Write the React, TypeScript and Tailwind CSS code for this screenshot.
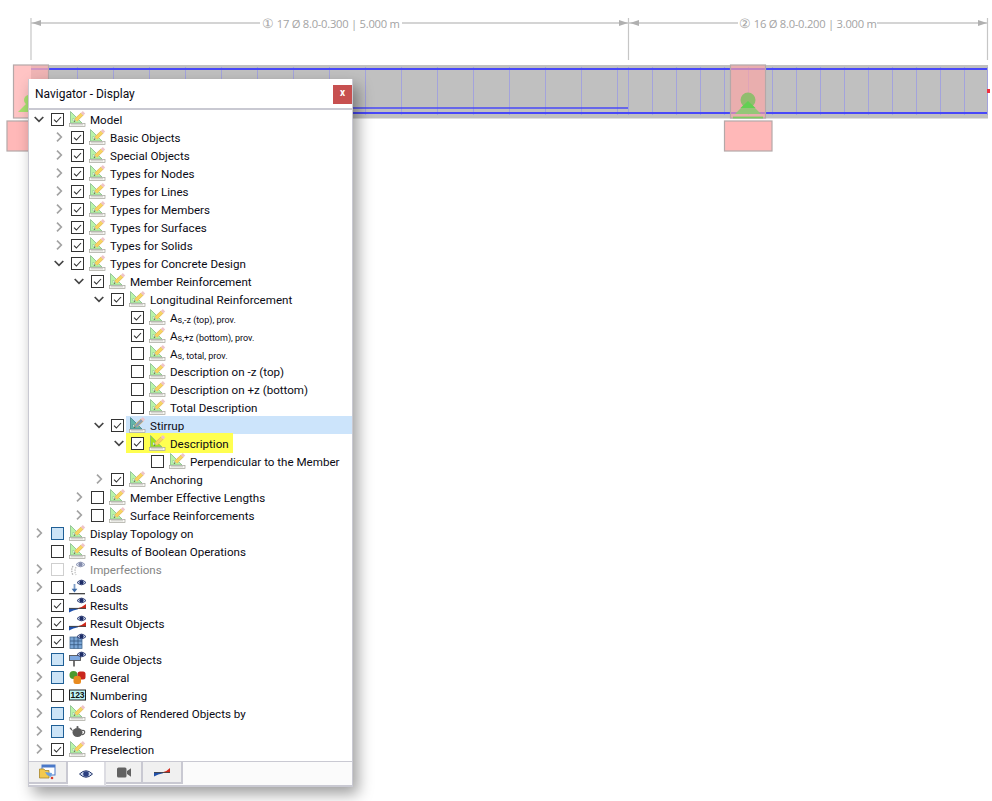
import type { ReactNode } from "react";

type Check = "on" | "off" | "fill" | "dis";
type IconName = "ruler" | "imperf" | "loads" | "results" | "mesh" | "guide" | "general" | "numbers" | "teapot";

type Row = {
  level: number;
  open?: boolean;
  leaf?: boolean;
  check: Check;
  icon?: IconName;
  label: ReactNode;
  mode?: "selected" | "yellow";
  muted?: boolean;
};

const sub = (rest: string) => (
  <>
    A<span className="text-[9px] relative top-[1px]">{rest}</span>
  </>
);

const rows: Row[] = [
  { level: 0, open: true, check: "on", label: "Model" },
  { level: 1, check: "on", label: "Basic Objects" },
  { level: 1, check: "on", label: "Special Objects" },
  { level: 1, check: "on", label: "Types for Nodes" },
  { level: 1, check: "on", label: "Types for Lines" },
  { level: 1, check: "on", label: "Types for Members" },
  { level: 1, check: "on", label: "Types for Surfaces" },
  { level: 1, check: "on", label: "Types for Solids" },
  { level: 1, open: true, check: "on", label: "Types for Concrete Design" },
  { level: 2, open: true, check: "on", label: "Member Reinforcement" },
  { level: 3, open: true, check: "on", label: "Longitudinal Reinforcement" },
  { level: 4, leaf: true, check: "on", label: sub("s,-z (top), prov.") },
  { level: 4, leaf: true, check: "on", label: sub("s,+z (bottom), prov.") },
  { level: 4, leaf: true, check: "off", label: sub("s, total, prov.") },
  { level: 4, leaf: true, check: "off", label: "Description on -z (top)" },
  { level: 4, leaf: true, check: "off", label: "Description on +z (bottom)" },
  { level: 4, leaf: true, check: "off", label: "Total Description" },
  { level: 3, open: true, check: "on", label: "Stirrup", mode: "selected" },
  { level: 4, open: true, check: "on", label: "Description", mode: "yellow" },
  { level: 5, leaf: true, check: "off", label: "Perpendicular to the Member" },
  { level: 3, check: "on", label: "Anchoring" },
  { level: 2, check: "off", label: "Member Effective Lengths" },
  { level: 2, check: "off", label: "Surface Reinforcements" },
  { level: 0, check: "fill", label: "Display Topology on" },
  { level: 0, leaf: true, check: "off", label: "Results of Boolean Operations" },
  { level: 0, check: "dis", icon: "imperf", label: "Imperfections", muted: true },
  { level: 0, check: "off", icon: "loads", label: "Loads" },
  { level: 0, leaf: true, check: "on", icon: "results", label: "Results" },
  { level: 0, check: "on", icon: "results", label: "Result Objects" },
  { level: 0, check: "on", icon: "mesh", label: "Mesh" },
  { level: 0, check: "fill", icon: "guide", label: "Guide Objects" },
  { level: 0, check: "fill", icon: "general", label: "General" },
  { level: 0, check: "off", icon: "numbers", label: "Numbering" },
  { level: 0, check: "fill", label: "Colors of Rendered Objects by" },
  { level: 0, check: "fill", icon: "teapot", label: "Rendering" },
  { level: 0, check: "on", label: "Preselection" },
];

const indent = ["pl-[4px]", "pl-[24px]", "pl-[44px]", "pl-[64px]", "pl-[84px]", "pl-[104px]"];

function Eye({ x = 8, y = 0 }: { x?: number; y?: number }) {
  return (
    <g transform={`translate(${x} ${y})`}>
      <path d="M0 3.6 Q4.5 -1.4 9 3.6 Q4.5 8 0 3.6Z" fill="#c9d6ec" stroke="#26356e" strokeWidth="0.9" />
      <circle cx="4.5" cy="3.4" r="2.1" fill="#1d2c66" />
    </g>
  );
}

function Ruler({ mode }: { mode?: Row["mode"] }) {
  const tri = mode === "selected" ? "#62b3a8" : mode === "yellow" ? "#a2e21a" : "#b8f5a8";
  const edge = mode === "selected" ? "#44848a" : "#86ba8c";
  const pencil = mode === "selected" ? "#8a9db4" : "#f8d662";
  return (
    <svg width="17" height="16" viewBox="0 0 17 16" className="shrink-0">
      <path d="M1.5 0.5 L1.5 12 L13 12 Z" fill={tri} stroke={edge} strokeWidth="0.8" />
      <path d="M4 7 L4 10 L7 10 Z" fill="#f4fff0" stroke={edge} strokeWidth="0.5" />
      <rect x="0.5" y="12.5" width="15.5" height="3" fill="#f8f8f4" stroke="#a4a49c" strokeWidth="0.7" />
      <path d="M3 13 V14.4 M5 13 V14.4 M7 13 V14.4 M9 13 V14.4 M11 13 V14.4 M13 13 V14.4" stroke="#8c8c84" strokeWidth="0.6" />
      <path d="M6.8 9.2 L13.2 3" stroke="#e0b65c" strokeWidth="3.8" />
      <path d="M6.8 9.2 L13.2 3" stroke={pencil} strokeWidth="2.6" />
      <path d="M13 3.2 L15 1.2" stroke="#eec4ca" strokeWidth="3.4" />
      <path d="M6 10.4 L4.8 11.2 L5.4 8.8Z" fill="#6a5a3a" />
    </svg>
  );
}

function TreeIcon({ name, mode }: { name?: IconName; mode?: Row["mode"] }) {
  if (!name || name === "ruler") return <Ruler mode={mode} />;
  return (
    <svg width="17" height="16" viewBox="0 0 17 16" className="shrink-0">
      {name === "imperf" && (
        <g opacity="0.55">
          <path d="M4 5 Q1.5 9 4 14" fill="none" stroke="#777" strokeWidth="1.4" strokeDasharray="1.5 1" />
          <path d="M7 6 Q5 10 7 14" fill="none" stroke="#999" strokeWidth="1.4" strokeDasharray="1.5 1" />
          <Eye x={7} y={0} />
        </g>
      )}
      {name === "loads" && (
        <>
          <path d="M0 14.7 H16" stroke="#333" strokeWidth="1.2" />
          <path d="M5.5 5 V10.5" stroke="#7f9fc8" strokeWidth="1.8" />
          <path d="M2.6 9.8 H8.4 L5.5 13.4Z" fill="#3e6ca8" />
          <Eye />
        </>
      )}
      {name === "results" && (
        <>
          <path d="M0 11.5 H8 Q13 10.5 17 7 V11.5 Z" fill="#cf2a1c" />
          <path d="M0 11.5 H9 V12.3 Q4 13 0 15.5Z" fill="#1f4fa8" />
          <path d="M0 11.4 H17" stroke="#222" strokeWidth="0.8" />
          <Eye />
        </>
      )}
      {name === "mesh" && (
        <>
          <rect x="1" y="4" width="12" height="11.5" fill="#7aa6d6" stroke="#4a6f96" strokeWidth="0.8" />
          <path d="M5 4 V15.5 M9 4 V15.5 M1 8 H13 M1 11.7 H13" stroke="#35577f" strokeWidth="0.8" />
          <Eye />
        </>
      )}
      {name === "guide" && (
        <>
          <path d="M5 9 V15.5" stroke="#666" strokeWidth="1.8" />
          <rect x="0.5" y="4.5" width="11" height="5" fill="#7ea8e0" stroke="#555" strokeWidth="0.9" />
          <Eye />
        </>
      )}
      {name === "general" && (
        <>
          <circle cx="4.5" cy="6" r="4" fill="#4c9a2e" />
          <rect x="8.5" y="2.5" width="8" height="8" rx="2.5" fill="#c9261e" />
          <rect x="4.5" y="7" width="7.5" height="8" rx="2.5" fill="#e88a1f" />
        </>
      )}
      {name === "numbers" && (
        <>
          <rect x="0.5" y="3" width="16" height="10" fill="#bff3f3" stroke="#222" />
          <text x="8.5" y="11.4" textAnchor="middle" fontSize="8.5" fontWeight="700" fontFamily="'Liberation Sans', sans-serif" fill="#111">123</text>
        </>
      )}
      {name === "teapot" && (
        <>
          <ellipse cx="8.5" cy="9.5" rx="5" ry="4.6" fill="#5c5c5c" />
          <path d="M4 8.5 Q1.5 6.5 0.5 5 L2 4.5 L5 10Z" fill="#5c5c5c" />
          <path d="M13 7.5 Q16.5 7 15.5 10 Q14.5 12 12.5 11.5" fill="none" stroke="#5c5c5c" strokeWidth="1.2" />
          <circle cx="8.5" cy="4.2" r="1.1" fill="#5c5c5c" />
        </>
      )}
    </svg>
  );
}

function Chevron({ open }: { open?: boolean }) {
  return (
    <svg width="12" height="12" viewBox="0 0 12 12" className="shrink-0">
      {open ? (
        <path d="M1.7 4 L6 8.3 L10.3 4" fill="none" stroke="#444" strokeWidth="1.7" />
      ) : (
        <path d="M4 1.7 L8.3 6 L4 10.3" fill="none" stroke="#a3a3a3" strokeWidth="1.7" />
      )}
    </svg>
  );
}

function CheckBox({ state }: { state: Check }) {
  const look = {
    on: "border-[#333] bg-white",
    off: "border-[#333] bg-white",
    fill: "border-[#1f5f96] bg-[#cce4f7]",
    dis: "border-[#cfcfcf] bg-white",
  }[state];
  return (
    <span className={`flex items-center justify-center w-[13px] h-[13px] border shrink-0 ${look}`}>
      {state === "on" && (
        <svg width="11" height="11" viewBox="0 0 11 11">
          <path d="M2 5.6 L4.4 8 L9 3" fill="none" stroke="#333" strokeWidth="1.1" />
        </svg>
      )}
    </span>
  );
}

function TreeRow({ row }: { row: Row }) {
  const text = (
    <span className={`ml-[4px] pt-[2px] whitespace-nowrap ${row.muted ? "text-[#858585]" : "text-[#0a0a14]"}`}>{row.label}</span>
  );
  return (
    <div className={`flex items-center h-[18px] ${indent[row.level]}`}>
      {row.leaf ? <span className="w-3 shrink-0" /> : <Chevron open={row.open} />}
      {row.mode === "yellow" ? (
        <div className="flex items-center h-[20px] ml-[1px] pl-[5px] pr-[4px] bg-[#ffff50]">
          <CheckBox state={row.check} />
          <span className="w-[5px]" />
          <TreeIcon name={row.icon} mode={row.mode} />
          {text}
        </div>
      ) : (
        <>
          <span className="w-[6px] shrink-0" />
          <CheckBox state={row.check} />
          {row.mode === "selected" ? (
            <div className="flex items-center flex-1 h-[18px] ml-[2px] pl-[3px] bg-[#cce4fb]">
              <TreeIcon name={row.icon} mode={row.mode} />
              {text}
            </div>
          ) : (
            <>
              <span className="w-[5px] shrink-0" />
              <TreeIcon name={row.icon} mode={row.mode} />
              {text}
            </>
          )}
        </>
      )}
    </div>
  );
}

const leftStirrups = Array.from({ length: 16 }, (_, i) => 617 - 36 * i);
const rightStirrups = [628, 652, 676, 700, 724, 748, 772, 796, 820, 844, 868, 892, 916, 940, 964, 987];

function Drawing() {
  return (
    <svg width="992" height="160" viewBox="0 0 992 160" className="block">
      {/* dimension lines */}
      <g stroke="#c6c6c6" strokeWidth="1.2">
        <path d="M31 18 V60 M628.5 18 V60 M987.5 18 V60" />
        <path d="M31 23 H260 M402 23 H628 M629 23 H738 M877 23 H987" strokeWidth="1.6" />
      </g>
      <g fill="#b0b0b0">
        <path d="M32 23 L41 20 V26Z" />
        <path d="M628 23 L619 20 V26Z" />
        <path d="M630 23 L639 20 V26Z" />
        <path d="M987 23 L978 20 V26Z" />
      </g>
      <g fontFamily="'Open Sans', sans-serif" fontSize="11.2" letterSpacing="-0.25" fill="#a3a3a3" textAnchor="middle">
        <text x="331" y="28"><tspan fontSize="13">①</tspan> 17 Ø 8.0-0.300 | 5.000 m</text>
        <text x="808" y="28"><tspan fontSize="13">②</tspan> 16 Ø 8.0-0.200 | 3.000 m</text>
      </g>

      {/* beam */}
      <rect x="31" y="65" width="957" height="53.5" fill="#c0c0c0" />
      <g stroke="#a3a3dc" strokeWidth="1">
        {leftStirrups.map((x) => (
          <path key={x} d={`M${x + 0.5} 67 V115`} />
        ))}
        {rightStirrups.map((x) => (
          <path key={x} d={`M${x + 0.5} 67 V115`} />
        ))}
      </g>
      <path d="M31 69 H987 M31 113 H987" stroke="#4848f8" strokeWidth="2" />
      <path d="M340 108 H628" stroke="#4848f8" strokeWidth="1.6" />
      <rect x="987" y="89" width="3" height="4" fill="#f03040" />

      {/* supports */}
      <g stroke="#b4a8a8" strokeWidth="1.2">
        <rect x="13.5" y="65" width="35" height="53" fill="#ffb0b0" fillOpacity="0.75" />
        <rect x="7" y="121" width="48" height="30" fill="#ffb8b8" />
        <rect x="730.5" y="65" width="35" height="53" fill="#ffa4a4" fillOpacity="0.65" />
        <rect x="724.5" y="121" width="47.5" height="30" fill="#ffb8b8" />
      </g>
      <path d="M18 112 L31 99 L38 112Z" fill="#a8e070" />
      <circle cx="29" cy="100" r="5" fill="#a8e070" />
      <path d="M748 101 L761 114 H735Z" fill="#94c678" />
      <circle cx="748" cy="100" r="7.5" fill="#90bd6e" />
      <path d="M748 101 L755.5 108 H740.5Z" fill="#62d052" />
      <rect x="733" y="116.6" width="30" height="1.8" fill="#7ccc60" />
    </svg>
  );
}

function TabBar() {
  const base = "flex items-center justify-center h-[22px] bg-[#f0f0f0] border-b-2 border-r-2 border-[#c9c9d2]";
  return (
    <div className="flex items-start h-[24px] shrink-0 mt-[3px] bg-[#fbfbfb] border-t border-[#c9c9d2]">
      <div className={`${base} w-[39px]`}>
        <svg width="17" height="16" viewBox="0 0 17 16">
          <rect x="3" y="1" width="13" height="10" fill="#fff" stroke="#4a78c8" />
          <rect x="3" y="1" width="13" height="2.5" fill="#4a78c8" />
          <path d="M0.5 5 H5 L6 6.5 H10 V14 H0.5Z" fill="#f3c94e" stroke="#a8862a" strokeWidth="0.8" />
          <path d="M6 8 L13 9 L12 13 L8 11Z" fill="#6aa0e0" />
          <circle cx="13" cy="14" r="1.3" fill="#d83a2a" />
        </svg>
      </div>
      <div className="flex items-center justify-center w-[38px] h-[24px] bg-white border-r-2 border-b border-[#dcdce2] relative z-10">
        <svg width="14" height="10" viewBox="0 0 14 10">
          <path d="M0.5 5 Q7 -1.5 13.5 5 Q7 11.5 0.5 5Z" fill="#cbd6ea" stroke="#27386f" />
          <circle cx="7" cy="5" r="2.8" fill="#2b3f80" />
        </svg>
      </div>
      <div className={`${base} w-[37px]`}>
        <svg width="14" height="11" viewBox="0 0 14 11">
          <rect x="0" y="0.5" width="9.5" height="10" rx="1.5" fill="#626262" />
          <path d="M10 4 L14 1.2 V9.8 L10 7Z" fill="#626262" />
        </svg>
      </div>
      <div className={`${base} w-[40px]`}>
        <svg width="17" height="10" viewBox="0 0 17 10">
          <path d="M0 5.5 H8 Q13 4.5 16 1 V5.5Z" fill="#d02a1c" />
          <path d="M0 5.5 H9 V6.3 Q4 7 0 9.5Z" fill="#1f4fa8" />
          <path d="M0 5.5 H16" stroke="#222" strokeWidth="0.7" />
        </svg>
      </div>
    </div>
  );
}

export default function App() {
  return (
    <div className="relative w-[992px] h-[801px] overflow-hidden bg-white font-['Roboto',sans-serif]">
      <Drawing />

      {/* floating navigator window */}
      <div className="absolute left-[28px] top-[79px] flex flex-col w-[325px] h-[708px] bg-white border-x border-b-2 border-[#c9c9d2] shadow-[5px_7px_14px_rgba(0,0,0,0.38)]">
        <div className="flex items-center justify-between h-[29px] shrink-0 pl-[6px] pt-[1px]">
          <span className="text-[12px] text-[#0a0a14]">Navigator - Display</span>
          <button className="flex items-center justify-center w-[19px] h-[19px] bg-[#c75050] text-white text-[10px] font-bold leading-none pb-[2px]">x</button>
        </div>
        <div className="flex-1 border-t-2 border-[#c9c9d2] text-[11.6px] leading-[18px]">
          {rows.map((row, i) => (
            <TreeRow key={i} row={row} />
          ))}
        </div>
        <TabBar />
      </div>
    </div>
  );
}
